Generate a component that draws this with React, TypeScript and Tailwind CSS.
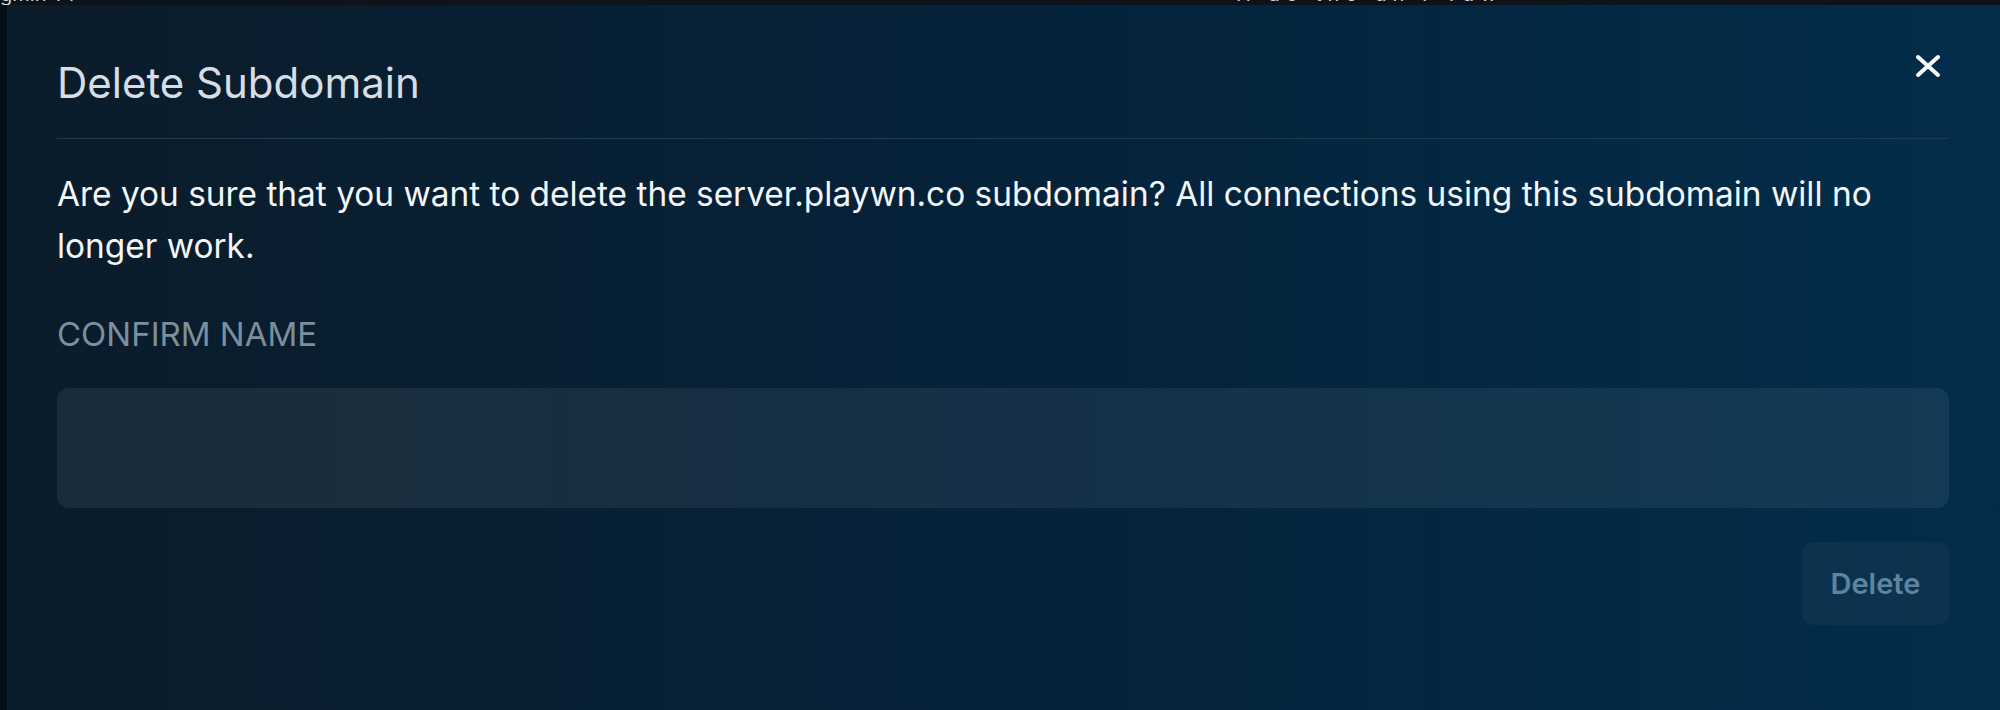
import React from "react";

const CloseIcon = () => (
  <svg width="28" height="24" viewBox="0 0 28 24" fill="none">
    <path d="M4 3 L24 21 M24 3 L4 21" stroke="#ffffff" strokeWidth="4" strokeLinecap="round" />
  </svg>
);

const App = () => {
  return (
    <div className="w-[2000px] h-[710px] overflow-hidden flex flex-col bg-[#04101a] font-['Inter',sans-serif]">
      {/* clipped strip of the page behind the modal */}
      <div className="h-[5px] shrink-0 bg-[#0d1318] overflow-hidden relative">
        <div className="flex text-[20px] leading-[20px] text-[#cfd6dc] -mt-[16px]">
          <span className="w-[1236px]">gmin TT</span>
          <span className="tracking-[6px]">H ae the un I Tuw</span>
        </div>
      </div>

      <div className="flex flex-1 min-h-0">
        <div className="w-[7px] shrink-0 bg-[#050e16]" />
        <div className="flex-1 bg-linear-to-r from-[#0b1c2a] via-[#05223a] to-[#022d4a] pl-[50px] pr-[51px] pt-[54px]">
          <div className="flex items-start justify-between">
            <h2 className="text-[42px] leading-[48px] text-[#d6dee4] font-normal">Delete Subdomain</h2>
            <button type="button" className="mt-[-5px] mr-[7px]">
              <CloseIcon />
            </button>
          </div>

          <div className="mt-[31px] h-px bg-[#1f3b52]" />

          <p className="mt-[29px] max-w-[1860px] text-[33.4px] leading-[52px] text-[#f3f6f8]">
            Are you sure that you want to delete the server.playwn.co subdomain? All connections using this subdomain will no longer work.
          </p>

          <div className="mt-[44px] text-[33px] leading-[36px] text-[#7c8f9d] uppercase">Confirm Name</div>

          <input
            type="text"
            className="mt-[36px] block w-full h-[120px] rounded-[12px] bg-white/[0.065] outline-none px-6 text-[30px] text-white"
          />

          <div className="flex justify-end mt-[34px]">
            <button
              type="button"
              disabled
              className="w-[147px] h-[83px] rounded-[12px] bg-white/[0.035] text-[29px] font-semibold text-[#5e84a2]"
            >
              Delete
            </button>
          </div>
        </div>
      </div>
    </div>
  );
};

export default App;
